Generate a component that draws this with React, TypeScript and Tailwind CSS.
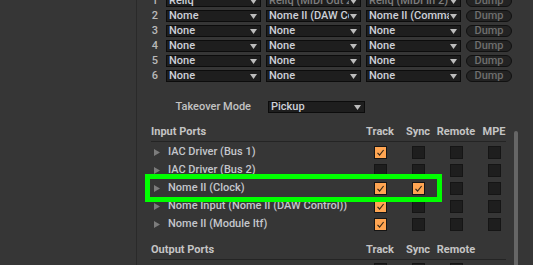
import React from "react";

const F = "font-['Roboto',sans-serif]";

function Arrow() {
  return (
    <svg width="7" height="5" viewBox="0 0 7 5" className="shrink-0">
      <polygon points="0,0 7,0 3.5,5" fill="#bdbdbd" />
    </svg>
  );
}

function Dropdown({ text, dim, w = "w-[95px]" }: { text: string; dim?: boolean; w?: string }) {
  return (
    <div
      className={`${w} h-[12px] shrink-0 flex items-center bg-[#1e1e1e] border border-[#0c0c0c] pl-[2px] pr-[3px] gap-[1px]`}
    >
      <span
        className={`flex-1 min-w-0 overflow-hidden whitespace-nowrap text-[11px] leading-[12px] font-medium ${
          dim ? "text-[#7d7d7d]" : "text-[#cdd0d8]"
        }`}
      >
        {text}
      </span>
      <Arrow />
    </div>
  );
}

function Dump() {
  return (
    <div className="w-[46px] h-[12px] shrink-0 rounded-full bg-[#232323] border border-[#111] flex items-center justify-center text-[11px] leading-[12px] text-[#6e6e6e] font-medium">
      Dump
    </div>
  );
}

function Check({ on }: { on?: boolean }) {
  return (
    <div
      className={`w-[13px] h-[13px] shrink-0 border border-[#151515] flex items-center justify-center ${
        on ? "bg-[#ffa552]" : "bg-[#1e1e1e]"
      }`}
    >
      {on && (
        <svg width="11" height="11" viewBox="0 0 11 11">
          <polyline points="2.5,5.8 4.6,8 8.6,3" fill="none" stroke="#3b2a18" strokeWidth="1.2" />
        </svg>
      )}
    </div>
  );
}

function Tri() {
  return (
    <svg width="6" height="7" viewBox="0 0 6 7" className="shrink-0">
      <polygon points="0,0 6,3.5 0,7" fill="#7c7c7c" />
    </svg>
  );
}

const midiRows = [
  ["1", "Reliq", "Reliq (MIDI Out 2)", "Reliq (MIDI In 2)", true],
  ["2", "Nome", "Nome II (DAW Control)", "Nome II (Command)", false],
  ["3", "None", "None", "None", false],
  ["4", "None", "None", "None", false],
  ["5", "None", "None", "None", false],
  ["6", "None", "None", "None", false],
] as const;

const inputs: [string, boolean[]][] = [
  ["IAC Driver (Bus 1)", [true, false, false, false]],
  ["IAC Driver (Bus 2)", [false, false, false, false]],
  ["Nome II (Clock)", [true, true, false, false]],
  ["Nome Input (Nome II (DAW Control))", [true, false, false, false]],
  ["Nome II (Module Itf)", [true, false, false, false]],
];

function Col({ children }: { children: React.ReactNode }) {
  return <div className="w-[38px] shrink-0 flex justify-center whitespace-nowrap">{children}</div>;
}

export default function App() {
  return (
    <div className={`relative w-[533px] h-[265px] overflow-hidden bg-[#363636] flex ${F}`}>
      <div className="w-[136px] shrink-0" />
      <div className="w-[1px] shrink-0 bg-[#2a2a2a]" />
      <div className="flex-1 flex flex-col">
        {/* MIDI table */}
        <div className="-mt-[5px] flex flex-col gap-[3px]">
          {midiRows.map(([n, a, b, c, dim]) => (
            <div key={n} className="flex items-center h-[12px]">
              <div className="w-[21px] shrink-0 text-right text-[11px] leading-[12px] font-medium text-[#b9b9b9]">{n}</div>
              <div className="w-[8px] shrink-0" />
              <div className="flex gap-[5px]">
                <Dropdown text={a} />
                <Dropdown text={b} dim={dim} />
                <Dropdown text={c} dim={dim} />
                <Dump />
              </div>
            </div>
          ))}
        </div>
        {/* Takeover */}
        <div className="mt-[19px] flex items-center h-[12px]">
          <div className="w-[114px] shrink-0 text-right text-[11px] font-medium text-[#c2c2c2]">Takeover Mode</div>
          <div className="w-[17px] shrink-0" />
          <Dropdown text="Pickup" w="w-[97px]" />
        </div>
        {/* Input ports */}
        <div className="mt-[11px] ml-[14px] w-[362px] flex flex-col">
          <div className="h-[17px] flex items-center text-[11px] font-bold text-[#c4c4c4]">
            <div className="flex-1 min-w-0">Input Ports</div>
            <Col>Track</Col>
            <Col>Sync</Col>
            <Col>Remote</Col>
            <Col>MPE</Col>
          </div>
          <div className="w-[355px] h-[1px] bg-[#242424]" />
          <div className="pt-[1px] flex flex-col">
            {inputs.map(([name, checks]) => (
              <div key={name} className="h-[18px] flex items-center">
                <div className="flex-1 min-w-0 flex items-center gap-[8px] pl-[3px] text-[11px] font-medium text-[#c4c6cc] whitespace-nowrap">
                  <Tri />
                  <span>{name}</span>
                </div>
                {checks.map((c, i) => (
                  <Col key={i}>
                    <Check on={c} />
                  </Col>
                ))}
              </div>
            ))}
          </div>
          <div className="mt-[9px] h-[17px] flex items-center text-[11px] font-bold text-[#c4c4c4]">
            <div className="flex-1 min-w-0">Output Ports</div>
            <Col>Track</Col>
            <Col>Sync</Col>
            <Col>Remote</Col>
            <Col>{""}</Col>
          </div>
          <div className="w-[355px] h-[1px] bg-[#242424]" />
          <div className="h-[18px] flex items-center">
            <div className="flex-1" />
            <Col>
              <Check />
            </Col>
            <Col>
              <Check />
            </Col>
            <Col>
              <Check />
            </Col>
            <Col>{""}</Col>
          </div>
        </div>
      </div>
      {/* scrollbar */}
      <div className="absolute left-[514px] top-[131px] w-[4px] h-[140px] rounded-t-full bg-[#666666]" />
      {/* highlight */}
      <div className="absolute left-[145px] top-[174px] w-[297px] h-[28px] border-[5px] border-[#00ff00]" />
    </div>
  );
}
